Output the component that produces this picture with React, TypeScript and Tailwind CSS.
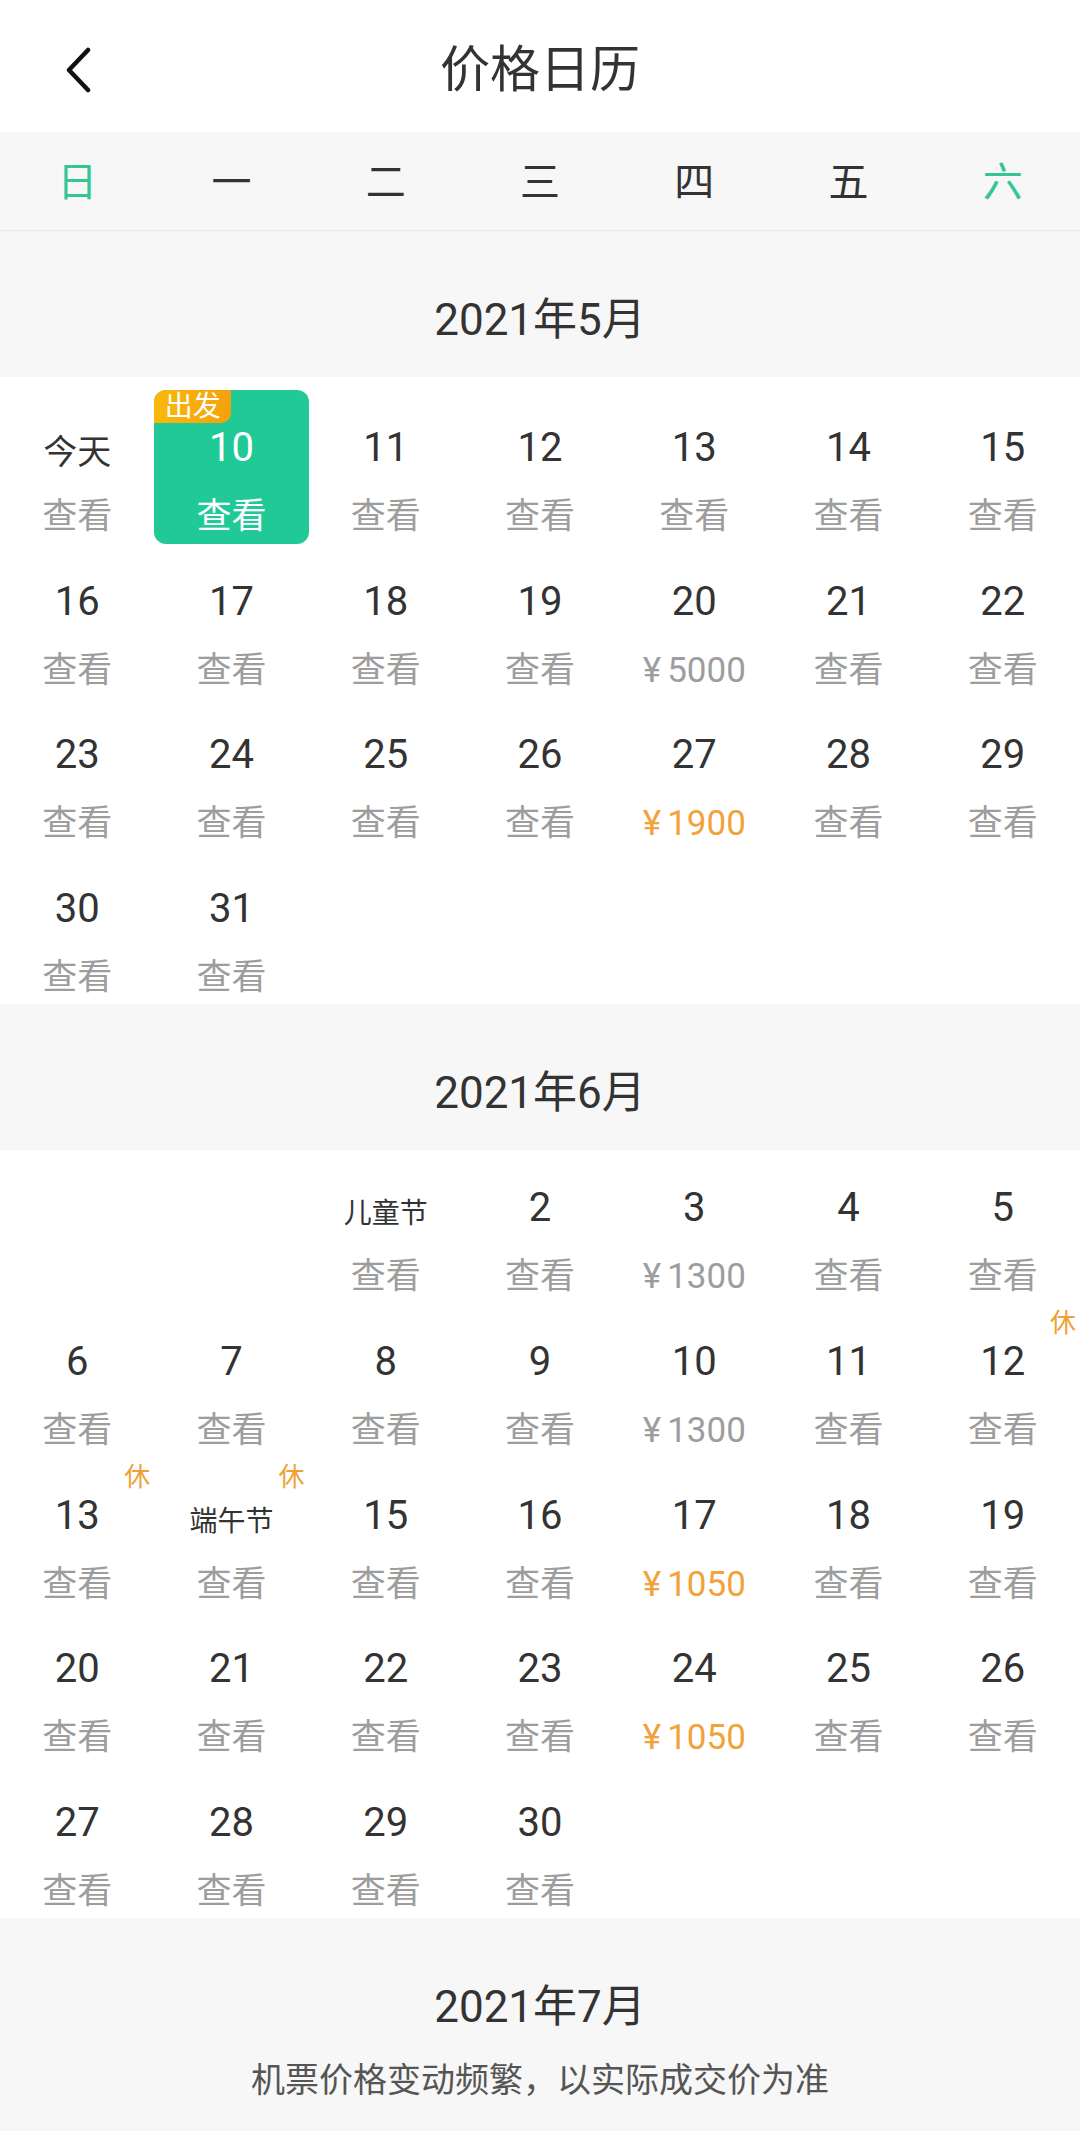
import React from "react";
import clsx from "clsx";

type Day = {
  label: string;
  kind?: "today" | "holiday";
  price?: string;
  orange?: boolean;
  rest?: boolean;
  selected?: boolean;
};

const d = (label: string, extra: Partial<Day> = {}): Day => ({ label, ...extra });

const range = (from: number, to: number) =>
  Array.from({ length: to - from + 1 }, (_, i) => d(String(from + i)));

const may: (Day | null)[] = [
  d("今天", { kind: "today" }),
  d("10", { selected: true }),
  ...range(11, 31),
].map((day) => {
  if (day.label === "20") return { ...day, price: "5000" };
  if (day.label === "27") return { ...day, price: "1900", orange: true };
  return day;
});

const june: (Day | null)[] = [
  null,
  null,
  d("儿童节", { kind: "holiday" }),
  ...range(2, 13),
  d("端午节", { kind: "holiday", rest: true }),
  ...range(15, 30),
].map((day) => {
  if (!day) return day;
  if (day.label === "3" || day.label === "10") return { ...day, price: "1300" };
  if (day.label === "17" || day.label === "24") return { ...day, price: "1050", orange: true };
  if (day.label === "12" || day.label === "13") return { ...day, rest: true };
  return day;
});

const weekdays = ["日", "一", "二", "三", "四", "五", "六"];

const DayCell = ({ day }: { day: Day | null }) => {
  if (!day) return <div className="h-[153.6px]" />;

  return (
    <div
      className={clsx(
        "relative flex h-[153.6px] flex-col items-center pt-[33px]",
        day.selected && "rounded-[12px] bg-[#21c996]"
      )}
    >
      {day.selected && (
        <span className="absolute left-0 top-0 flex h-[33px] w-[77px] items-center justify-center rounded-tl-[12px] rounded-br-[10px] bg-gradient-to-r from-[#f9b90a] to-[#f4a10c] text-[28px] leading-none text-white">
          出发
        </span>
      )}
      {day.rest && (
        <span className="absolute right-[4px] top-[4px] text-[26px] leading-[30px] text-[#eea235]">休</span>
      )}
      <div
        className={clsx(
          "flex h-[50px] items-center",
          day.kind === "today" && "pt-[8px] text-[34px]",
          day.kind === "holiday" && "pt-[12px] text-[28px]",
          !day.kind && "text-[40px]",
          day.selected ? "text-white" : "text-[#333]"
        )}
      >
        {day.label}
      </div>
      <div
        className={clsx(
          "mt-[22px] text-[35px] leading-[44px]",
          day.selected ? "text-white" : day.orange ? "text-[#f1a23a]" : "text-[#9d9d9d]"
        )}
      >
        {day.price ? (
          <>
            <span className="mr-[6px]">¥</span>
            {day.price}
          </>
        ) : (
          "查看"
        )}
      </div>
    </div>
  );
};

const MonthTitle = ({ title }: { title: string }) => (
  <div className="h-[146px] bg-[#f7f7f7] pt-[64px] text-center text-[44px] leading-[50px] text-[#333]">
    {title}
  </div>
);

export default function App() {
  return (
    <div className="min-h-screen w-[1080px] bg-[#f7f7f7] font-['Roboto','Noto_Sans_CJK_SC',sans-serif]">
      <header className="flex h-[132px] items-center bg-white pt-[8px]">
        <div className="flex w-[160px] items-center pl-[62px]">
          <svg width="32" height="46" viewBox="0 0 32 46" fill="none">
            <path d="M26 3 L7 23 L26 43" stroke="#111" strokeWidth="4.5" strokeLinecap="round" strokeLinejoin="round" />
          </svg>
        </div>
        <h1 className="flex-1 text-center text-[50px] font-normal leading-none text-[#333]">价格日历</h1>
        <div className="w-[160px]" />
      </header>

      <div className="grid h-[99px] grid-cols-7 items-center border-b border-[#e8e8e8] bg-[#f7f7f7] pt-[4px] text-center text-[40px]">
        {weekdays.map((w, i) => (
          <span key={w} className={i === 0 || i === 6 ? "text-[#34c596]" : "text-[#333]"}>
            {w}
          </span>
        ))}
      </div>

      <MonthTitle title="2021年5月" />
      <div className="grid grid-cols-7 bg-white pt-[13px]">
        {may.map((day, i) => (
          <DayCell key={i} day={day} />
        ))}
      </div>

      <MonthTitle title="2021年6月" />
      <div className="grid grid-cols-7 bg-white">
        {june.map((day, i) => (
          <DayCell key={i} day={day} />
        ))}
      </div>

      <div className="bg-[#f7f7f7] pb-[40px] pt-[64px] text-center">
        <div className="text-[44px] leading-[50px] text-[#333]">2021年7月</div>
        <div className="mt-[24px] text-[34px] leading-[48px] text-[#555]">机票价格变动频繁，以实际成交价为准</div>
      </div>
    </div>
  );
}
